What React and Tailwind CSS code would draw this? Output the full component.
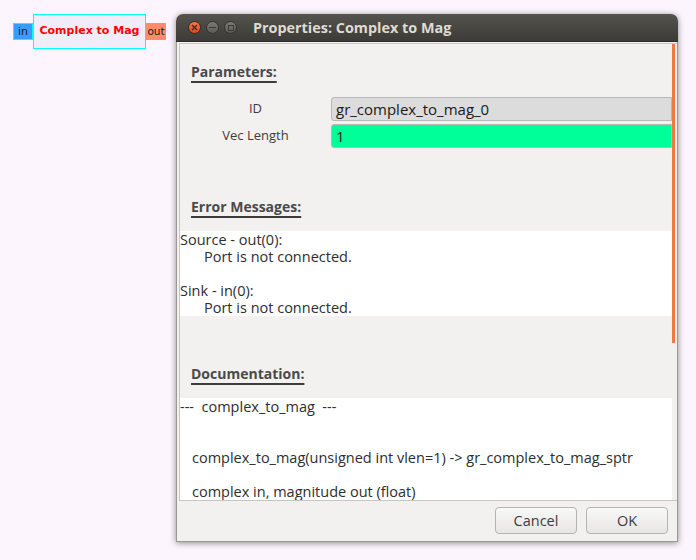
import React from 'react'

const font = { fontFamily: '"Open Sans", "DejaVu Sans", sans-serif' }

function Section({ title }) {
  return (
    <div className="pl-[11px]">
      <span className="font-bold text-[14px] text-[#4a4a4a] underline decoration-2 underline-offset-[4px] decoration-[#3c3c3c]">
        {title}
      </span>
    </div>
  )
}

function Field({ label, value, bg }) {
  return (
    <div className="flex items-center h-[24px]">
      <div className="w-[151px] text-center text-[13px] text-[#3c3c3c]">{label}</div>
      <div
        className={`flex-1 h-[24px] rounded-l-[3px] border border-[#b8b8b8] ${bg} flex items-center pl-[4px] text-[15px] text-[#1a1a1a]`}
      >
        {value}
      </div>
    </div>
  )
}

function WinButton({ kind }) {
  if (kind === 'close') {
    return (
      <div className="w-[13px] h-[13px] rounded-full bg-gradient-to-b from-[#f37a4d] to-[#d8471b] border border-[#3a2a22] flex items-center justify-center">
        <svg width="7" height="7" viewBox="0 0 7 7">
          <path d="M1 1L6 6M6 1L1 6" stroke="#4a2a1e" strokeWidth="1.3" />
        </svg>
      </div>
    )
  }
  return (
    <div className="w-[13px] h-[13px] rounded-full bg-gradient-to-b from-[#7b7a74] to-[#5c5b56] border border-[#33322f] flex items-center justify-center">
      {kind === 'min' ? (
        <div className="w-[7px] h-[1.5px] bg-[#3a3935]" />
      ) : (
        <div className="w-[6px] h-[6px] border border-[#3a3935]" />
      )}
    </div>
  )
}

export default function App() {
  return (
    <div className="relative w-[696px] h-[560px] bg-[#fdf5fd] overflow-hidden" style={font}>
      {/* flowgraph block */}
      <div
        className="absolute left-[13px] top-[14px] flex items-center"
        style={{ fontFamily: '"DejaVu Sans", sans-serif' }}
      >
        <div className="w-[20px] h-[17px] bg-[#3a9bff] border border-[#00ffff] text-[11px] leading-[15px] text-center text-[#1a1a1a]">
          in
        </div>
        <div className="w-[113px] h-[35px] bg-[#f1ecfa] border border-[#00ffff] flex items-center justify-center text-[11px] font-bold text-[#ff0000]">
          Complex to Mag
        </div>
        <div className="w-[20px] h-[17px] bg-[#ff8c6c] text-[10.5px] leading-[17px] text-center text-[#1a1a1a]">
          out
        </div>
      </div>

      {/* properties window */}
      <div className="absolute left-[176px] top-[14px] w-[502px] h-[528px] flex flex-col rounded-t-[7px] shadow-[0_1px_6px_rgba(0,0,0,0.45)]">
        <div className="h-[28px] flex items-center rounded-t-[7px] bg-gradient-to-b from-[#55534d] to-[#3c3b37] border-b border-[#2b2a27]">
          <div className="flex items-center gap-[5px] pl-[12px]">
            <WinButton kind="close" />
            <WinButton kind="min" />
            <WinButton kind="max" />
          </div>
          <div className="ml-[16px] text-[14.4px] font-bold text-[#dfdbd2]">Properties: Complex to Mag</div>
        </div>

        <div className="flex-1 flex flex-col bg-[#f2f1f0] border-x border-b border-[#9a9895]">
          <div className="mt-[1px] ml-[2px] h-[458px] flex border-l border-y border-[#c8c6c3] overflow-hidden">
            <div className="flex-1 flex flex-col overflow-hidden">
              <div className="pt-[15px]">
                <Section title="Parameters:" />
              </div>
              <div className="mt-[14px] flex flex-col gap-[3px]">
                <Field label="ID" value="gr_complex_to_mag_0" bg="bg-[#dcdcdc]" />
                <Field label="Vec Length" value="1" bg="bg-[#00ff99]" />
              </div>
              <div className="pt-[46px]">
                <Section title="Error Messages:" />
              </div>
              <div className="mt-[13px] bg-white text-[14.5px] leading-[17px] text-[#2e2e2e] h-[85px] shrink-0">
                <div>Source - out(0):</div>
                <div className="pl-[24px]">Port is not connected.</div>
                <div className="h-[17px]" />
                <div>Sink - in(0):</div>
                <div className="pl-[24px]">Port is not connected.</div>
              </div>
              <div className="pt-[45px]">
                <Section title="Documentation:" />
              </div>
              <div className="mt-[13px] bg-white text-[14.5px] leading-[17px] text-[#2e2e2e] flex-1 whitespace-pre">
                <div>---  complex_to_mag  ---</div>
                <div className="h-[17px]" />
                <div className="h-[17px]" />
                <div className="pl-[12px]">complex_to_mag(unsigned int vlen=1) -&gt; gr_complex_to_mag_sptr</div>
                <div className="h-[17px]" />
                <div className="pl-[12px]">complex in, magnitude out (float)</div>
              </div>
            </div>
            <div className="w-[5px] flex flex-col">
              <div className="h-[299px] w-[3px] bg-[#f07746]" />
            </div>
          </div>

          <div className="flex justify-end gap-[9px] pr-[9px] mt-[6px]">
            <button className="w-[82px] h-[27px] rounded-[4px] border border-[#b5b3ae] bg-gradient-to-b from-[#f8f8f7] to-[#e7e6e4] text-[14.5px] text-[#3c3c3c]">
              Cancel
            </button>
            <button className="w-[82px] h-[27px] rounded-[4px] border border-[#b5b3ae] bg-gradient-to-b from-[#f8f8f7] to-[#e7e6e4] text-[14.5px] text-[#3c3c3c]">
              OK
            </button>
          </div>
        </div>
      </div>
    </div>
  )
}
